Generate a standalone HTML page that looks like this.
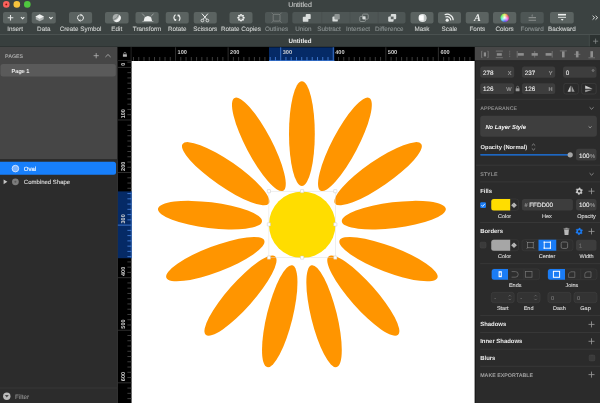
<!DOCTYPE html>
<html><head><meta charset="utf-8">
<style>
*{margin:0;padding:0}
html,body{width:600px;height:403px;overflow:hidden;background:#2c2c2c}
svg{display:block;will-change:transform;text-rendering:geometricPrecision;font-family:"Liberation Sans",sans-serif}
</style></head><body>
<svg width="600" height="403" viewBox="0 0 600 403">
<rect x="0.00" y="0.00" width="600.00" height="34.00" rx="0" fill="#3b4241" />
<line x1="0.00" y1="34.50" x2="600.00" y2="34.50" stroke="#4a5150" stroke-width="1" />
<circle cx="6.3" cy="4.4" r="3.3" fill="#fc625d"/>
<circle cx="16.8" cy="4.4" r="3.3" fill="#f7c33c"/>
<circle cx="27.3" cy="4.4" r="3.3" fill="#4fc83f"/>
<circle cx="6.3" cy="4.4" r="0.9" fill="#8c0f06"/>
<text x="300.00" y="7.10" font-size="7" fill="#c4c6c5" stroke="#c4c6c5" stroke-width="0.12" text-anchor="middle" font-weight="normal" font-style="normal" >Untitled</text>
<rect x="3.00" y="11.90" width="24.20" height="11.60" rx="2" fill="#5b6361" />
<text x="15.10" y="30.70" font-size="6.3" fill="#cdd0cf" stroke="#cdd0cf" stroke-width="0.12" text-anchor="middle" font-weight="normal" font-style="normal" >Insert</text>
<rect x="31.70" y="11.90" width="24.10" height="11.60" rx="2" fill="#5b6361" />
<text x="43.75" y="30.70" font-size="6.3" fill="#cdd0cf" stroke="#cdd0cf" stroke-width="0.12" text-anchor="middle" font-weight="normal" font-style="normal" >Data</text>
<rect x="69.00" y="11.90" width="23.10" height="11.60" rx="2" fill="#5b6361" />
<text x="80.55" y="30.70" font-size="6.3" fill="#cdd0cf" stroke="#cdd0cf" stroke-width="0.12" text-anchor="middle" font-weight="normal" font-style="normal" >Create Symbol</text>
<rect x="105.00" y="11.90" width="23.60" height="11.60" rx="2" fill="#5b6361" />
<text x="116.80" y="30.70" font-size="6.3" fill="#cdd0cf" stroke="#cdd0cf" stroke-width="0.12" text-anchor="middle" font-weight="normal" font-style="normal" >Edit</text>
<rect x="135.50" y="11.90" width="23.20" height="11.60" rx="2" fill="#5b6361" />
<text x="147.10" y="30.70" font-size="6.3" fill="#cdd0cf" stroke="#cdd0cf" stroke-width="0.12" text-anchor="middle" font-weight="normal" font-style="normal" >Transform</text>
<rect x="165.75" y="11.90" width="23.00" height="11.60" rx="2" fill="#5b6361" />
<text x="177.25" y="30.70" font-size="6.3" fill="#cdd0cf" stroke="#cdd0cf" stroke-width="0.12" text-anchor="middle" font-weight="normal" font-style="normal" >Rotate</text>
<rect x="193.75" y="11.90" width="23.00" height="11.60" rx="2" fill="#5b6361" />
<text x="205.25" y="30.70" font-size="6.3" fill="#cdd0cf" stroke="#cdd0cf" stroke-width="0.12" text-anchor="middle" font-weight="normal" font-style="normal" >Scissors</text>
<rect x="229.50" y="11.90" width="23.00" height="11.60" rx="2" fill="#5b6361" />
<text x="241.00" y="30.70" font-size="6.3" fill="#cdd0cf" stroke="#cdd0cf" stroke-width="0.12" text-anchor="middle" font-weight="normal" font-style="normal" >Rotate Copies</text>
<rect x="265.00" y="11.90" width="23.00" height="11.60" rx="2" fill="#4e5655" />
<text x="276.50" y="30.70" font-size="6.3" fill="#899090" stroke="#899090" stroke-width="0.12" text-anchor="middle" font-weight="normal" font-style="normal" >Outlines</text>
<rect x="410.50" y="11.90" width="23.00" height="11.60" rx="2" fill="#5b6361" />
<text x="422.00" y="30.70" font-size="6.3" fill="#cdd0cf" stroke="#cdd0cf" stroke-width="0.12" text-anchor="middle" font-weight="normal" font-style="normal" >Mask</text>
<rect x="438.00" y="11.90" width="23.00" height="11.60" rx="2" fill="#5b6361" />
<text x="449.50" y="30.70" font-size="6.3" fill="#cdd0cf" stroke="#cdd0cf" stroke-width="0.12" text-anchor="middle" font-weight="normal" font-style="normal" >Scale</text>
<rect x="465.75" y="11.90" width="23.00" height="11.60" rx="2" fill="#5b6361" />
<text x="477.25" y="30.70" font-size="6.3" fill="#cdd0cf" stroke="#cdd0cf" stroke-width="0.12" text-anchor="middle" font-weight="normal" font-style="normal" >Fonts</text>
<rect x="493.00" y="11.90" width="23.25" height="11.60" rx="2" fill="#5b6361" />
<text x="504.62" y="30.70" font-size="6.3" fill="#cdd0cf" stroke="#cdd0cf" stroke-width="0.12" text-anchor="middle" font-weight="normal" font-style="normal" >Colors</text>
<rect x="520.50" y="11.90" width="23.25" height="11.60" rx="2" fill="#4e5655" />
<text x="532.12" y="30.70" font-size="6.3" fill="#899090" stroke="#899090" stroke-width="0.12" text-anchor="middle" font-weight="normal" font-style="normal" >Forward</text>
<rect x="550.00" y="11.90" width="23.75" height="11.60" rx="2" fill="#5b6361" />
<text x="561.88" y="30.70" font-size="6.3" fill="#cdd0cf" stroke="#cdd0cf" stroke-width="0.12" text-anchor="middle" font-weight="normal" font-style="normal" >Backward</text>
<rect x="292.30" y="11.90" width="113.20" height="11.60" rx="2" fill="#4e5655" />
<text x="303.40" y="30.70" font-size="6.3" fill="#899090" stroke="#899090" stroke-width="0.12" text-anchor="middle" font-weight="normal" font-style="normal" >Union</text>
<line x1="321.80" y1="11.90" x2="321.80" y2="23.50" stroke="#474e4d" stroke-width="0.7" />
<text x="329.00" y="30.70" font-size="6.3" fill="#899090" stroke="#899090" stroke-width="0.12" text-anchor="middle" font-weight="normal" font-style="normal" >Subtract</text>
<line x1="350.00" y1="11.90" x2="350.00" y2="23.50" stroke="#474e4d" stroke-width="0.7" />
<text x="358.00" y="30.70" font-size="6.3" fill="#899090" stroke="#899090" stroke-width="0.12" text-anchor="middle" font-weight="normal" font-style="normal" >Intersect</text>
<line x1="378.20" y1="11.90" x2="378.20" y2="23.50" stroke="#474e4d" stroke-width="0.7" />
<text x="389.30" y="30.70" font-size="6.3" fill="#899090" stroke="#899090" stroke-width="0.12" text-anchor="middle" font-weight="normal" font-style="normal" >Difference</text>
<path d="M10.5 14.9V20.5M7.7 17.7H13.3" stroke="#e4e6e5" stroke-width="1.1"/>
<path d="M20.9 17.1L22.6 18.7L24.3 17.1" stroke="#eef0ef" stroke-width="1.1" fill="none"/>
<path d="M35.8 16.5L39.7 18.8L43.7 16.5L43.7 19.2L39.7 21.3L35.8 19.2Z" fill="#aeb3b2"/>
<path d="M39.7 14.3L44.0 16.6L39.7 18.9L35.4 16.6Z" fill="#eef0ef"/>
<path d="M49.2 17.1L50.9 18.7L52.6 17.1" stroke="#eef0ef" stroke-width="1.1" fill="none"/>
<path d="M79.6 15.0A2.9 2.9 0 0 0 79.2 20.4M81.4 20.6A2.9 2.9 0 0 0 81.8 15.2" stroke="#eef0ef" stroke-width="1.0" fill="none"/>
<path d="M80.2 13.8L82.6 15.0L80.6 16.4Z M80.8 21.8L78.4 20.6L80.4 19.2Z" fill="#eef0ef"/>
<circle cx="116.7" cy="17.9" r="4.0" fill="#a9aead"/>
<path d="M113.87 20.73Q118.4 19.6 119.53 15.07A4 4 0 0 1 113.87 20.73Z" fill="#eef0ef"/>
<path d="M113.2 19.9Q117.6 18.6 118.7 14.2" stroke="#6f7574" stroke-width="0.7" fill="none"/>
<path d="M143.7 21.1L144.6 17.6Q147.9 14.3 151.2 17.6L152.1 21.1Z" fill="#eef0ef"/>
<path d="M142.2 13.6L145.0 16.6M153.6 13.6L150.8 16.6M142.4 21.5H153.4" stroke="#c4c8c7" stroke-width="0.6" fill="none"/>
<path d="M175.5 14.6Q172.6 17.4 175.0 20.0M178.5 15.2Q181.3 18.0 178.9 20.9" stroke="#eef0ef" stroke-width="1.1" fill="none"/>
<path d="M174.4 18.9L176.4 19.3L176.0 21.0L174.2 20.6Z M177.6 14.5L179.6 14.8L179.3 16.6L177.5 16.3Z" fill="#eef0ef"/>
<circle cx="202.4" cy="20.5" r="1.35" stroke="#eef0ef" stroke-width="0.8" fill="none"/><circle cx="207.4" cy="20.5" r="1.35" stroke="#eef0ef" stroke-width="0.8" fill="none"/>
<path d="M203.1 19.3L207.9 13.6M206.7 19.3L201.9 13.6" stroke="#eef0ef" stroke-width="1.0" fill="none"/>
<circle cx="243.70" cy="17.75" r="1.05" fill="#eef0ef"/>
<circle cx="242.91" cy="19.66" r="1.05" fill="#eef0ef"/>
<circle cx="241.00" cy="20.45" r="1.05" fill="#eef0ef"/>
<circle cx="239.09" cy="19.66" r="1.05" fill="#eef0ef"/>
<circle cx="238.30" cy="17.75" r="1.05" fill="#eef0ef"/>
<circle cx="239.09" cy="15.84" r="1.05" fill="#eef0ef"/>
<circle cx="241.00" cy="15.05" r="1.05" fill="#eef0ef"/>
<circle cx="242.91" cy="15.84" r="1.05" fill="#eef0ef"/>
<circle cx="241" cy="17.75" r="1.5" fill="#5d6260" stroke="#d0d4d3" stroke-width="0.5"/>
<rect x="273.2" y="14.3" width="6.8" height="6.8" rx="1" stroke="#8a8e8d" stroke-width="0.7" fill="none"/>
<path d="M271.6 12.7L273.4 14.5M281.6 12.7L279.8 14.5M271.6 22.7L273.4 20.9M281.6 22.7L279.8 20.9" stroke="#8a8e8d" stroke-width="0.6"/>
<rect x="302.8" y="16.8" width="5.6" height="5.0" rx="0.9" fill="#d8dcdb"/><rect x="305.7" y="14.1" width="5.0" height="5.0" rx="0.9" fill="#d8dcdb"/>
<rect x="332.4" y="16.6" width="5.4" height="5.0" rx="0.9" fill="#d8dcdb"/><rect x="334.4" y="14.1" width="5.4" height="5.4" rx="0.9" fill="#8e9493"/>
<rect x="359.8" y="16.4" width="5.6" height="5.1" rx="0.9" fill="none" stroke="#8f9594" stroke-width="0.9"/><rect x="362.6" y="14.1" width="5.6" height="5.1" rx="0.9" fill="none" stroke="#8f9594" stroke-width="0.9"/><rect x="362.6" y="16.4" width="2.8" height="2.8" fill="#d8dcdb"/>
<rect x="388.2" y="16.6" width="5.4" height="5.1" rx="0.9" fill="#d8dcdb"/><rect x="390.8" y="14.1" width="5.4" height="5.1" rx="0.9" fill="#d8dcdb"/><rect x="390.8" y="16.6" width="2.8" height="2.6" fill="#5f6665"/>
<circle cx="422.5" cy="17.9" r="4.0" fill="#dfe3e2"/><rect x="419.2" y="15.4" width="4.6" height="4.8" fill="#ffffff"/><path d="M423.8 14.2A4 4 0 0 1 423.8 21.6Z" fill="#c2c7c6"/>
<path d="M445.40 17.08A3.6 3.6 0 0 1 450.79 20.51M444.66 14.76A6.0 6.0 0 0 1 453.20 20.20" stroke="#eef0ef" stroke-width="1.2" fill="none"/>
<circle cx="447.2" cy="20.2" r="1.6" fill="#eef0ef"/>
<text x="477.30" y="21.20" font-size="10.2" fill="#eef0ef" stroke="#eef0ef" stroke-width="0.0" text-anchor="middle" font-weight="bold" font-style="italic" font-family="Liberation Serif">A</text>
<defs><radialGradient id="wh" cx="0.5" cy="0.5" r="0.5"><stop offset="0" stop-color="#fff" stop-opacity="0.95"/><stop offset="1" stop-color="#fff" stop-opacity="0"/></radialGradient></defs>
<path d="M504.7 17.8L504.70 13.80A4.0 4.0 0 0 1 505.74 13.94Z" fill="rgb(255,232,76)" stroke="rgb(255,232,76)" stroke-width="0.2"/>
<path d="M504.7 17.8L505.74 13.94A4.0 4.0 0 0 1 506.70 14.34Z" fill="rgb(255,188,76)" stroke="rgb(255,188,76)" stroke-width="0.2"/>
<path d="M504.7 17.8L506.70 14.34A4.0 4.0 0 0 1 507.53 14.97Z" fill="rgb(255,143,76)" stroke="rgb(255,143,76)" stroke-width="0.2"/>
<path d="M504.7 17.8L507.53 14.97A4.0 4.0 0 0 1 508.16 15.80Z" fill="rgb(255,98,76)" stroke="rgb(255,98,76)" stroke-width="0.2"/>
<path d="M504.7 17.8L508.16 15.80A4.0 4.0 0 0 1 508.56 16.76Z" fill="rgb(255,76,98)" stroke="rgb(255,76,98)" stroke-width="0.2"/>
<path d="M504.7 17.8L508.56 16.76A4.0 4.0 0 0 1 508.70 17.80Z" fill="rgb(255,76,143)" stroke="rgb(255,76,143)" stroke-width="0.2"/>
<path d="M504.7 17.8L508.70 17.80A4.0 4.0 0 0 1 508.56 18.84Z" fill="rgb(255,76,188)" stroke="rgb(255,76,188)" stroke-width="0.2"/>
<path d="M504.7 17.8L508.56 18.84A4.0 4.0 0 0 1 508.16 19.80Z" fill="rgb(255,76,232)" stroke="rgb(255,76,232)" stroke-width="0.2"/>
<path d="M504.7 17.8L508.16 19.80A4.0 4.0 0 0 1 507.53 20.63Z" fill="rgb(232,76,255)" stroke="rgb(232,76,255)" stroke-width="0.2"/>
<path d="M504.7 17.8L507.53 20.63A4.0 4.0 0 0 1 506.70 21.26Z" fill="rgb(188,76,255)" stroke="rgb(188,76,255)" stroke-width="0.2"/>
<path d="M504.7 17.8L506.70 21.26A4.0 4.0 0 0 1 505.74 21.66Z" fill="rgb(143,76,255)" stroke="rgb(143,76,255)" stroke-width="0.2"/>
<path d="M504.7 17.8L505.74 21.66A4.0 4.0 0 0 1 504.70 21.80Z" fill="rgb(98,76,255)" stroke="rgb(98,76,255)" stroke-width="0.2"/>
<path d="M504.7 17.8L504.70 21.80A4.0 4.0 0 0 1 503.66 21.66Z" fill="rgb(76,98,255)" stroke="rgb(76,98,255)" stroke-width="0.2"/>
<path d="M504.7 17.8L503.66 21.66A4.0 4.0 0 0 1 502.70 21.26Z" fill="rgb(76,143,255)" stroke="rgb(76,143,255)" stroke-width="0.2"/>
<path d="M504.7 17.8L502.70 21.26A4.0 4.0 0 0 1 501.87 20.63Z" fill="rgb(76,188,255)" stroke="rgb(76,188,255)" stroke-width="0.2"/>
<path d="M504.7 17.8L501.87 20.63A4.0 4.0 0 0 1 501.24 19.80Z" fill="rgb(76,232,255)" stroke="rgb(76,232,255)" stroke-width="0.2"/>
<path d="M504.7 17.8L501.24 19.80A4.0 4.0 0 0 1 500.84 18.84Z" fill="rgb(76,255,232)" stroke="rgb(76,255,232)" stroke-width="0.2"/>
<path d="M504.7 17.8L500.84 18.84A4.0 4.0 0 0 1 500.70 17.80Z" fill="rgb(76,255,188)" stroke="rgb(76,255,188)" stroke-width="0.2"/>
<path d="M504.7 17.8L500.70 17.80A4.0 4.0 0 0 1 500.84 16.76Z" fill="rgb(76,255,143)" stroke="rgb(76,255,143)" stroke-width="0.2"/>
<path d="M504.7 17.8L500.84 16.76A4.0 4.0 0 0 1 501.24 15.80Z" fill="rgb(76,255,98)" stroke="rgb(76,255,98)" stroke-width="0.2"/>
<path d="M504.7 17.8L501.24 15.80A4.0 4.0 0 0 1 501.87 14.97Z" fill="rgb(98,255,76)" stroke="rgb(98,255,76)" stroke-width="0.2"/>
<path d="M504.7 17.8L501.87 14.97A4.0 4.0 0 0 1 502.70 14.34Z" fill="rgb(143,255,76)" stroke="rgb(143,255,76)" stroke-width="0.2"/>
<path d="M504.7 17.8L502.70 14.34A4.0 4.0 0 0 1 503.66 13.94Z" fill="rgb(188,255,76)" stroke="rgb(188,255,76)" stroke-width="0.2"/>
<path d="M504.7 17.8L503.66 13.94A4.0 4.0 0 0 1 504.70 13.80Z" fill="rgb(232,255,76)" stroke="rgb(232,255,76)" stroke-width="0.2"/>
<circle cx="504.7" cy="17.8" r="4.0" fill="url(#wh)"/>
<path d="M528.6 17.6h7.4M528.6 20.3h7.4" stroke="#8a8e8d" stroke-width="1.1"/><path d="M531.2 15.6l1.0-1.4 1.0 1.4z" fill="#8a8e8d"/><path d="M532.2 15.4v1.6" stroke="#8a8e8d" stroke-width="0.6"/>
<path d="M558.0 14.7h8.0" stroke="#eef0ef" stroke-width="1.6"/><path d="M558.0 17.4h8.0" stroke="#c6cac9" stroke-width="1.2"/><path d="M560.8 19.0h2.8l-1.4 1.8z" fill="#eef0ef"/>
<path d="M592.6 15.8l2 1.9-2 1.9M595.6 15.8l2 1.9-2 1.9" stroke="#eef0ef" stroke-width="0.9" fill="none"/>
<rect x="0.00" y="35.00" width="600.00" height="12.00" rx="0" fill="#383f3e" />
<rect x="589.60" y="35.00" width="10.40" height="12.00" rx="0" fill="#2c3231" />
<line x1="589.30" y1="35.00" x2="589.30" y2="47.00" stroke="#4b5352" stroke-width="0.7" />
<path d="M595.6 38.6v5.2M593 41.2h5.2" stroke="#8f9493" stroke-width="0.7"/>
<line x1="0.00" y1="47.00" x2="600.00" y2="47.00" stroke="#252a29" stroke-width="1" />
<text x="300.00" y="43.10" font-size="6.2" fill="#eeeeee" stroke="#eeeeee" stroke-width="0.0" text-anchor="middle" font-weight="bold" font-style="normal" >Untitled</text>
<rect x="0.00" y="47.00" width="117.00" height="113.00" rx="0" fill="#464646" />
<line x1="0.00" y1="159.90" x2="117.00" y2="159.90" stroke="#242424" stroke-width="1.3" />
<rect x="0.00" y="160.20" width="117.00" height="243.00" rx="0" fill="#2c2c2c" />
<text x="5.00" y="57.80" font-size="5.3" fill="#a8a8a8" stroke="#a8a8a8" stroke-width="0.0" text-anchor="start" font-weight="bold" font-style="normal" >PAGES</text>
<rect x="0.50" y="64.00" width="115.30" height="12.50" rx="2.5" fill="#5a5a5a" />
<text x="11.50" y="72.80" font-size="5.7" fill="#f2f2f2" stroke="#f2f2f2" stroke-width="0.12" text-anchor="start" font-weight="normal" font-style="normal" >Page 1</text>
<rect x="-2.00" y="161.80" width="118.00" height="13.00" rx="2.5" fill="#177ffb" />
<text x="23.80" y="171.00" font-size="6.0" fill="#ffffff" stroke="#ffffff" stroke-width="0.12" text-anchor="start" font-weight="normal" font-style="normal" >Oval</text>
<text x="23.80" y="184.20" font-size="6.0" fill="#dcdcdc" stroke="#dcdcdc" stroke-width="0.12" text-anchor="start" font-weight="normal" font-style="normal" >Combined Shape</text>
<line x1="0.00" y1="388.00" x2="117.00" y2="388.00" stroke="#3a3a3a" stroke-width="0.8" />
<text x="15.00" y="398.50" font-size="6.3" fill="#8c8c8c" stroke="#8c8c8c" stroke-width="0.12" text-anchor="start" font-weight="normal" font-style="normal" >Filter</text>
<path d="M96.2 53.1v5.2M93.6 55.7h5.2" stroke="#b5b5b5" stroke-width="0.8"/>
<path d="M105.4 57.0l2.6-2.5 2.6 2.5" stroke="#b5b5b5" stroke-width="0.8" fill="none"/>
<circle cx="15.4" cy="168.6" r="3.3" fill="#7fb4fd" stroke="#e8f1ff" stroke-width="0.8"/>
<path d="M3.6 179.4L7.4 181.8L3.6 184.2Z" fill="#c4c4c4"/>
<circle cx="15.4" cy="181.8" r="3.4" fill="#7c7c7c"/><circle cx="15.4" cy="181.8" r="1.0" fill="#5a5a5a"/>
<circle cx="6.8" cy="396.2" r="3.7" fill="#bcbcbc"/><path d="M4.8 394.9h4l-2 2.6z" fill="#4a4a4a"/>
<rect x="117.85" y="47.00" width="357.10" height="14.00" rx="0" fill="#000" />
<rect x="117.85" y="47.00" width="13.75" height="356.00" rx="0" fill="#000" />
<line x1="117.40" y1="160.50" x2="117.40" y2="403.00" stroke="#343434" stroke-width="0.9" />
<rect x="131.60" y="61.00" width="343.20" height="342.00" rx="0" fill="#ffffff" />
<rect x="269.00" y="47.30" width="65.40" height="13.70" rx="0" fill="#052a66" />
<line x1="133.49" y1="57.00" x2="133.49" y2="60.70" stroke="#4c4c4c" stroke-width="0.8" />
<line x1="138.75" y1="57.00" x2="138.75" y2="60.70" stroke="#4c4c4c" stroke-width="0.8" />
<line x1="144.01" y1="57.00" x2="144.01" y2="60.70" stroke="#4c4c4c" stroke-width="0.8" />
<line x1="149.26" y1="57.00" x2="149.26" y2="60.70" stroke="#4c4c4c" stroke-width="0.8" />
<line x1="154.52" y1="57.00" x2="154.52" y2="60.70" stroke="#4c4c4c" stroke-width="0.8" />
<line x1="159.78" y1="57.00" x2="159.78" y2="60.70" stroke="#4c4c4c" stroke-width="0.8" />
<line x1="165.04" y1="57.00" x2="165.04" y2="60.70" stroke="#4c4c4c" stroke-width="0.8" />
<line x1="170.29" y1="57.00" x2="170.29" y2="60.70" stroke="#4c4c4c" stroke-width="0.8" />
<line x1="175.55" y1="47.30" x2="175.55" y2="60.70" stroke="#3a3a3a" stroke-width="0.8" />
<text x="177.55" y="54.00" font-size="5.6" fill="#d4d4d4" stroke="#d4d4d4" stroke-width="0.0" text-anchor="start" font-weight="bold" font-style="normal" >100</text>
<line x1="180.81" y1="57.00" x2="180.81" y2="60.70" stroke="#4c4c4c" stroke-width="0.8" />
<line x1="186.06" y1="57.00" x2="186.06" y2="60.70" stroke="#4c4c4c" stroke-width="0.8" />
<line x1="191.32" y1="57.00" x2="191.32" y2="60.70" stroke="#4c4c4c" stroke-width="0.8" />
<line x1="196.58" y1="57.00" x2="196.58" y2="60.70" stroke="#4c4c4c" stroke-width="0.8" />
<line x1="201.83" y1="57.00" x2="201.83" y2="60.70" stroke="#4c4c4c" stroke-width="0.8" />
<line x1="207.09" y1="57.00" x2="207.09" y2="60.70" stroke="#4c4c4c" stroke-width="0.8" />
<line x1="212.35" y1="57.00" x2="212.35" y2="60.70" stroke="#4c4c4c" stroke-width="0.8" />
<line x1="217.61" y1="57.00" x2="217.61" y2="60.70" stroke="#4c4c4c" stroke-width="0.8" />
<line x1="222.86" y1="57.00" x2="222.86" y2="60.70" stroke="#4c4c4c" stroke-width="0.8" />
<line x1="228.12" y1="47.30" x2="228.12" y2="60.70" stroke="#3a3a3a" stroke-width="0.8" />
<text x="230.12" y="54.00" font-size="5.6" fill="#d4d4d4" stroke="#d4d4d4" stroke-width="0.0" text-anchor="start" font-weight="bold" font-style="normal" >200</text>
<line x1="233.38" y1="57.00" x2="233.38" y2="60.70" stroke="#4c4c4c" stroke-width="0.8" />
<line x1="238.63" y1="57.00" x2="238.63" y2="60.70" stroke="#4c4c4c" stroke-width="0.8" />
<line x1="243.89" y1="57.00" x2="243.89" y2="60.70" stroke="#4c4c4c" stroke-width="0.8" />
<line x1="249.15" y1="57.00" x2="249.15" y2="60.70" stroke="#4c4c4c" stroke-width="0.8" />
<line x1="254.40" y1="57.00" x2="254.40" y2="60.70" stroke="#4c4c4c" stroke-width="0.8" />
<line x1="259.66" y1="57.00" x2="259.66" y2="60.70" stroke="#4c4c4c" stroke-width="0.8" />
<line x1="264.92" y1="57.00" x2="264.92" y2="60.70" stroke="#4c4c4c" stroke-width="0.8" />
<line x1="270.18" y1="57.00" x2="270.18" y2="60.70" stroke="#4a88e6" stroke-width="0.8" />
<line x1="275.43" y1="57.00" x2="275.43" y2="60.70" stroke="#4a88e6" stroke-width="0.8" />
<line x1="280.69" y1="47.30" x2="280.69" y2="60.70" stroke="#4a88e6" stroke-width="0.8" />
<text x="282.69" y="54.00" font-size="5.6" fill="#d4d4d4" stroke="#d4d4d4" stroke-width="0.0" text-anchor="start" font-weight="bold" font-style="normal" >300</text>
<line x1="285.95" y1="57.00" x2="285.95" y2="60.70" stroke="#4a88e6" stroke-width="0.8" />
<line x1="291.20" y1="57.00" x2="291.20" y2="60.70" stroke="#4a88e6" stroke-width="0.8" />
<line x1="296.46" y1="57.00" x2="296.46" y2="60.70" stroke="#4a88e6" stroke-width="0.8" />
<line x1="301.72" y1="57.00" x2="301.72" y2="60.70" stroke="#4a88e6" stroke-width="0.8" />
<line x1="306.97" y1="57.00" x2="306.97" y2="60.70" stroke="#4a88e6" stroke-width="0.8" />
<line x1="312.23" y1="57.00" x2="312.23" y2="60.70" stroke="#4a88e6" stroke-width="0.8" />
<line x1="317.49" y1="57.00" x2="317.49" y2="60.70" stroke="#4a88e6" stroke-width="0.8" />
<line x1="322.75" y1="57.00" x2="322.75" y2="60.70" stroke="#4a88e6" stroke-width="0.8" />
<line x1="328.00" y1="57.00" x2="328.00" y2="60.70" stroke="#4a88e6" stroke-width="0.8" />
<line x1="333.26" y1="47.30" x2="333.26" y2="60.70" stroke="#4a88e6" stroke-width="0.8" />
<text x="335.26" y="54.00" font-size="5.6" fill="#d4d4d4" stroke="#d4d4d4" stroke-width="0.0" text-anchor="start" font-weight="bold" font-style="normal" >400</text>
<line x1="338.52" y1="57.00" x2="338.52" y2="60.70" stroke="#4c4c4c" stroke-width="0.8" />
<line x1="343.77" y1="57.00" x2="343.77" y2="60.70" stroke="#4c4c4c" stroke-width="0.8" />
<line x1="349.03" y1="57.00" x2="349.03" y2="60.70" stroke="#4c4c4c" stroke-width="0.8" />
<line x1="354.29" y1="57.00" x2="354.29" y2="60.70" stroke="#4c4c4c" stroke-width="0.8" />
<line x1="359.54" y1="57.00" x2="359.54" y2="60.70" stroke="#4c4c4c" stroke-width="0.8" />
<line x1="364.80" y1="57.00" x2="364.80" y2="60.70" stroke="#4c4c4c" stroke-width="0.8" />
<line x1="370.06" y1="57.00" x2="370.06" y2="60.70" stroke="#4c4c4c" stroke-width="0.8" />
<line x1="375.32" y1="57.00" x2="375.32" y2="60.70" stroke="#4c4c4c" stroke-width="0.8" />
<line x1="380.57" y1="57.00" x2="380.57" y2="60.70" stroke="#4c4c4c" stroke-width="0.8" />
<line x1="385.83" y1="47.30" x2="385.83" y2="60.70" stroke="#3a3a3a" stroke-width="0.8" />
<text x="387.83" y="54.00" font-size="5.6" fill="#d4d4d4" stroke="#d4d4d4" stroke-width="0.0" text-anchor="start" font-weight="bold" font-style="normal" >500</text>
<line x1="391.09" y1="57.00" x2="391.09" y2="60.70" stroke="#4c4c4c" stroke-width="0.8" />
<line x1="396.34" y1="57.00" x2="396.34" y2="60.70" stroke="#4c4c4c" stroke-width="0.8" />
<line x1="401.60" y1="57.00" x2="401.60" y2="60.70" stroke="#4c4c4c" stroke-width="0.8" />
<line x1="406.86" y1="57.00" x2="406.86" y2="60.70" stroke="#4c4c4c" stroke-width="0.8" />
<line x1="412.12" y1="57.00" x2="412.12" y2="60.70" stroke="#4c4c4c" stroke-width="0.8" />
<line x1="417.37" y1="57.00" x2="417.37" y2="60.70" stroke="#4c4c4c" stroke-width="0.8" />
<line x1="422.63" y1="57.00" x2="422.63" y2="60.70" stroke="#4c4c4c" stroke-width="0.8" />
<line x1="427.89" y1="57.00" x2="427.89" y2="60.70" stroke="#4c4c4c" stroke-width="0.8" />
<line x1="433.14" y1="57.00" x2="433.14" y2="60.70" stroke="#4c4c4c" stroke-width="0.8" />
<line x1="438.40" y1="47.30" x2="438.40" y2="60.70" stroke="#3a3a3a" stroke-width="0.8" />
<text x="440.40" y="54.00" font-size="5.6" fill="#d4d4d4" stroke="#d4d4d4" stroke-width="0.0" text-anchor="start" font-weight="bold" font-style="normal" >600</text>
<line x1="443.66" y1="57.00" x2="443.66" y2="60.70" stroke="#4c4c4c" stroke-width="0.8" />
<line x1="448.91" y1="57.00" x2="448.91" y2="60.70" stroke="#4c4c4c" stroke-width="0.8" />
<line x1="454.17" y1="57.00" x2="454.17" y2="60.70" stroke="#4c4c4c" stroke-width="0.8" />
<line x1="459.43" y1="57.00" x2="459.43" y2="60.70" stroke="#4c4c4c" stroke-width="0.8" />
<line x1="464.69" y1="57.00" x2="464.69" y2="60.70" stroke="#4c4c4c" stroke-width="0.8" />
<line x1="469.94" y1="57.00" x2="469.94" y2="60.70" stroke="#4c4c4c" stroke-width="0.8" />
<line x1="269.00" y1="60.50" x2="334.40" y2="60.50" stroke="#3f7fe0" stroke-width="0.7" />
<rect x="117.85" y="191.40" width="13.75" height="66.80" rx="0" fill="#052a66" />
<line x1="127.40" y1="62.14" x2="131.40" y2="62.14" stroke="#4c4c4c" stroke-width="0.8" />
<line x1="117.85" y1="67.40" x2="131.40" y2="67.40" stroke="#3a3a3a" stroke-width="0.8" />
<text transform="translate(125.3 65.80) rotate(-90)" font-size="5.6" font-weight="bold" fill="#d4d4d4">0</text>
<line x1="127.40" y1="72.66" x2="131.40" y2="72.66" stroke="#4c4c4c" stroke-width="0.8" />
<line x1="127.40" y1="77.91" x2="131.40" y2="77.91" stroke="#4c4c4c" stroke-width="0.8" />
<line x1="127.40" y1="83.17" x2="131.40" y2="83.17" stroke="#4c4c4c" stroke-width="0.8" />
<line x1="127.40" y1="88.43" x2="131.40" y2="88.43" stroke="#4c4c4c" stroke-width="0.8" />
<line x1="127.40" y1="93.69" x2="131.40" y2="93.69" stroke="#4c4c4c" stroke-width="0.8" />
<line x1="127.40" y1="98.94" x2="131.40" y2="98.94" stroke="#4c4c4c" stroke-width="0.8" />
<line x1="127.40" y1="104.20" x2="131.40" y2="104.20" stroke="#4c4c4c" stroke-width="0.8" />
<line x1="127.40" y1="109.46" x2="131.40" y2="109.46" stroke="#4c4c4c" stroke-width="0.8" />
<line x1="127.40" y1="114.71" x2="131.40" y2="114.71" stroke="#4c4c4c" stroke-width="0.8" />
<line x1="117.85" y1="119.97" x2="131.40" y2="119.97" stroke="#3a3a3a" stroke-width="0.8" />
<text transform="translate(125.3 118.37) rotate(-90)" font-size="5.6" font-weight="bold" fill="#d4d4d4">100</text>
<line x1="127.40" y1="125.23" x2="131.40" y2="125.23" stroke="#4c4c4c" stroke-width="0.8" />
<line x1="127.40" y1="130.48" x2="131.40" y2="130.48" stroke="#4c4c4c" stroke-width="0.8" />
<line x1="127.40" y1="135.74" x2="131.40" y2="135.74" stroke="#4c4c4c" stroke-width="0.8" />
<line x1="127.40" y1="141.00" x2="131.40" y2="141.00" stroke="#4c4c4c" stroke-width="0.8" />
<line x1="127.40" y1="146.25" x2="131.40" y2="146.25" stroke="#4c4c4c" stroke-width="0.8" />
<line x1="127.40" y1="151.51" x2="131.40" y2="151.51" stroke="#4c4c4c" stroke-width="0.8" />
<line x1="127.40" y1="156.77" x2="131.40" y2="156.77" stroke="#4c4c4c" stroke-width="0.8" />
<line x1="127.40" y1="162.03" x2="131.40" y2="162.03" stroke="#4c4c4c" stroke-width="0.8" />
<line x1="127.40" y1="167.28" x2="131.40" y2="167.28" stroke="#4c4c4c" stroke-width="0.8" />
<line x1="117.85" y1="172.54" x2="131.40" y2="172.54" stroke="#3a3a3a" stroke-width="0.8" />
<text transform="translate(125.3 170.94) rotate(-90)" font-size="5.6" font-weight="bold" fill="#d4d4d4">200</text>
<line x1="127.40" y1="177.80" x2="131.40" y2="177.80" stroke="#4c4c4c" stroke-width="0.8" />
<line x1="127.40" y1="183.05" x2="131.40" y2="183.05" stroke="#4c4c4c" stroke-width="0.8" />
<line x1="127.40" y1="188.31" x2="131.40" y2="188.31" stroke="#4c4c4c" stroke-width="0.8" />
<line x1="127.40" y1="193.57" x2="131.40" y2="193.57" stroke="#4a88e6" stroke-width="0.8" />
<line x1="127.40" y1="198.82" x2="131.40" y2="198.82" stroke="#4a88e6" stroke-width="0.8" />
<line x1="127.40" y1="204.08" x2="131.40" y2="204.08" stroke="#4a88e6" stroke-width="0.8" />
<line x1="127.40" y1="209.34" x2="131.40" y2="209.34" stroke="#4a88e6" stroke-width="0.8" />
<line x1="127.40" y1="214.60" x2="131.40" y2="214.60" stroke="#4a88e6" stroke-width="0.8" />
<line x1="127.40" y1="219.85" x2="131.40" y2="219.85" stroke="#4a88e6" stroke-width="0.8" />
<line x1="117.85" y1="225.11" x2="131.40" y2="225.11" stroke="#4a88e6" stroke-width="0.8" />
<text transform="translate(125.3 223.51) rotate(-90)" font-size="5.6" font-weight="bold" fill="#d4d4d4">300</text>
<line x1="127.40" y1="230.37" x2="131.40" y2="230.37" stroke="#4a88e6" stroke-width="0.8" />
<line x1="127.40" y1="235.62" x2="131.40" y2="235.62" stroke="#4a88e6" stroke-width="0.8" />
<line x1="127.40" y1="240.88" x2="131.40" y2="240.88" stroke="#4a88e6" stroke-width="0.8" />
<line x1="127.40" y1="246.14" x2="131.40" y2="246.14" stroke="#4a88e6" stroke-width="0.8" />
<line x1="127.40" y1="251.39" x2="131.40" y2="251.39" stroke="#4a88e6" stroke-width="0.8" />
<line x1="127.40" y1="256.65" x2="131.40" y2="256.65" stroke="#4a88e6" stroke-width="0.8" />
<line x1="127.40" y1="261.91" x2="131.40" y2="261.91" stroke="#4c4c4c" stroke-width="0.8" />
<line x1="127.40" y1="267.17" x2="131.40" y2="267.17" stroke="#4c4c4c" stroke-width="0.8" />
<line x1="127.40" y1="272.42" x2="131.40" y2="272.42" stroke="#4c4c4c" stroke-width="0.8" />
<line x1="117.85" y1="277.68" x2="131.40" y2="277.68" stroke="#3a3a3a" stroke-width="0.8" />
<text transform="translate(125.3 276.08) rotate(-90)" font-size="5.6" font-weight="bold" fill="#d4d4d4">400</text>
<line x1="127.40" y1="282.94" x2="131.40" y2="282.94" stroke="#4c4c4c" stroke-width="0.8" />
<line x1="127.40" y1="288.19" x2="131.40" y2="288.19" stroke="#4c4c4c" stroke-width="0.8" />
<line x1="127.40" y1="293.45" x2="131.40" y2="293.45" stroke="#4c4c4c" stroke-width="0.8" />
<line x1="127.40" y1="298.71" x2="131.40" y2="298.71" stroke="#4c4c4c" stroke-width="0.8" />
<line x1="127.40" y1="303.96" x2="131.40" y2="303.96" stroke="#4c4c4c" stroke-width="0.8" />
<line x1="127.40" y1="309.22" x2="131.40" y2="309.22" stroke="#4c4c4c" stroke-width="0.8" />
<line x1="127.40" y1="314.48" x2="131.40" y2="314.48" stroke="#4c4c4c" stroke-width="0.8" />
<line x1="127.40" y1="319.74" x2="131.40" y2="319.74" stroke="#4c4c4c" stroke-width="0.8" />
<line x1="127.40" y1="324.99" x2="131.40" y2="324.99" stroke="#4c4c4c" stroke-width="0.8" />
<line x1="117.85" y1="330.25" x2="131.40" y2="330.25" stroke="#3a3a3a" stroke-width="0.8" />
<text transform="translate(125.3 328.65) rotate(-90)" font-size="5.6" font-weight="bold" fill="#d4d4d4">500</text>
<line x1="127.40" y1="335.51" x2="131.40" y2="335.51" stroke="#4c4c4c" stroke-width="0.8" />
<line x1="127.40" y1="340.76" x2="131.40" y2="340.76" stroke="#4c4c4c" stroke-width="0.8" />
<line x1="127.40" y1="346.02" x2="131.40" y2="346.02" stroke="#4c4c4c" stroke-width="0.8" />
<line x1="127.40" y1="351.28" x2="131.40" y2="351.28" stroke="#4c4c4c" stroke-width="0.8" />
<line x1="127.40" y1="356.53" x2="131.40" y2="356.53" stroke="#4c4c4c" stroke-width="0.8" />
<line x1="127.40" y1="361.79" x2="131.40" y2="361.79" stroke="#4c4c4c" stroke-width="0.8" />
<line x1="127.40" y1="367.05" x2="131.40" y2="367.05" stroke="#4c4c4c" stroke-width="0.8" />
<line x1="127.40" y1="372.31" x2="131.40" y2="372.31" stroke="#4c4c4c" stroke-width="0.8" />
<line x1="127.40" y1="377.56" x2="131.40" y2="377.56" stroke="#4c4c4c" stroke-width="0.8" />
<line x1="117.85" y1="382.82" x2="131.40" y2="382.82" stroke="#3a3a3a" stroke-width="0.8" />
<text transform="translate(125.3 381.22) rotate(-90)" font-size="5.6" font-weight="bold" fill="#d4d4d4">600</text>
<line x1="127.40" y1="388.08" x2="131.40" y2="388.08" stroke="#4c4c4c" stroke-width="0.8" />
<line x1="127.40" y1="393.33" x2="131.40" y2="393.33" stroke="#4c4c4c" stroke-width="0.8" />
<line x1="127.40" y1="398.59" x2="131.40" y2="398.59" stroke="#4c4c4c" stroke-width="0.8" />
<line x1="131.20" y1="191.40" x2="131.20" y2="258.20" stroke="#3f7fe0" stroke-width="0.7" />
<line x1="117.85" y1="60.50" x2="131.60" y2="60.50" stroke="#2a2a2a" stroke-width="0.8" />
<rect x="122.9" y="54.2" width="4.0" height="2.6" rx="0.4" fill="#b5b5b5"/><path d="M123.8 54.4v-0.9a1.1 1.1 0 0 1 2.2 0v0.9" stroke="#b5b5b5" stroke-width="0.6" fill="none"/>
<line x1="131.10" y1="47.00" x2="131.10" y2="61.00" stroke="#333333" stroke-width="0.7" />
<rect x="474.85" y="47.00" width="125.15" height="356.00" rx="0" fill="#2b2b2b" />
<line x1="475.40" y1="61.00" x2="475.40" y2="403.00" stroke="#1c1c1c" stroke-width="1.1" />
<rect x="474.85" y="47.00" width="125.15" height="13.40" rx="0" fill="#474747" />
<path d="M482.4 51.2h-0.8v6.4h0.8M487.4 51.2h0.8v6.4h-0.8" stroke="#8e8e8e" stroke-width="0.6" fill="none"/><rect x="483.8" y="52.4" width="2.2" height="4.0" fill="#8e8e8e"/>
<path d="M495.8 51.1h7M495.8 57.7h7" stroke="#8e8e8e" stroke-width="0.6"/><rect x="496.8" y="53.2" width="5" height="2.5" fill="#8e8e8e"/>
<path d="M509.7 50.8v7.2" stroke="#8e8e8e" stroke-width="0.6" stroke-dasharray="0.9 0.9"/>
<path d="M517.2 51v6.6" stroke="#8e8e8e" stroke-width="0.6"/><rect x="517.8" y="53.1" width="6" height="2.6" fill="#8e8e8e"/>
<path d="M534.7 51v6.6" stroke="#8e8e8e" stroke-width="0.6"/><rect x="531.6" y="53.1" width="6.2" height="2.6" fill="#8e8e8e"/>
<path d="M552.2 51v6.6" stroke="#8e8e8e" stroke-width="0.6"/><rect x="545.6" y="53.1" width="6" height="2.6" fill="#8e8e8e"/>
<path d="M559.8 50.9h7" stroke="#8e8e8e" stroke-width="0.6"/><rect x="562.0" y="51.4" width="2.6" height="6" fill="#8e8e8e"/>
<path d="M574 54.3h6.4" stroke="#8e8e8e" stroke-width="0.6"/><rect x="575.9" y="51.2" width="2.6" height="6.2" fill="#8e8e8e"/>
<path d="M588.4 57.8h6.6" stroke="#8e8e8e" stroke-width="0.6"/><rect x="590.4" y="51.2" width="2.6" height="6" fill="#8e8e8e"/>
<line x1="474.85" y1="60.60" x2="600.00" y2="60.60" stroke="#2a2a2a" stroke-width="0.9" />
<rect x="480.20" y="66.60" width="34.00" height="11.20" rx="2.5" fill="#3d3d3d" />
<text x="483.00" y="74.80" font-size="6.3" fill="#ececec" stroke="#ececec" stroke-width="0.12" text-anchor="start" font-weight="normal" font-style="normal" >278</text>
<text x="511.60" y="74.70" font-size="5.6" fill="#a6a6a6" stroke="#a6a6a6" stroke-width="0.12" text-anchor="end" font-weight="normal" font-style="normal" >X</text>
<rect x="521.90" y="66.60" width="33.30" height="11.20" rx="2.5" fill="#3d3d3d" />
<text x="524.70" y="74.80" font-size="6.3" fill="#ececec" stroke="#ececec" stroke-width="0.12" text-anchor="start" font-weight="normal" font-style="normal" >237</text>
<text x="552.60" y="74.70" font-size="5.6" fill="#a6a6a6" stroke="#a6a6a6" stroke-width="0.12" text-anchor="end" font-weight="normal" font-style="normal" >Y</text>
<rect x="563.00" y="66.60" width="33.50" height="11.20" rx="2.5" fill="#3d3d3d" />
<text x="565.80" y="74.80" font-size="6.3" fill="#ececec" stroke="#ececec" stroke-width="0.12" text-anchor="start" font-weight="normal" font-style="normal" >0</text>
<circle cx="593.10" cy="70.50" r="0.9" fill="none" stroke="#a6a6a6" stroke-width="0.6"/>
<rect x="480.20" y="83.20" width="34.00" height="10.80" rx="2.5" fill="#3d3d3d" />
<text x="483.00" y="91.00" font-size="6.3" fill="#ececec" stroke="#ececec" stroke-width="0.12" text-anchor="start" font-weight="normal" font-style="normal" >126</text>
<text x="511.60" y="90.90" font-size="5.6" fill="#a6a6a6" stroke="#a6a6a6" stroke-width="0.12" text-anchor="end" font-weight="normal" font-style="normal" >W</text>
<rect x="521.90" y="83.20" width="33.30" height="10.80" rx="2.5" fill="#3d3d3d" />
<text x="524.70" y="91.00" font-size="6.3" fill="#ececec" stroke="#ececec" stroke-width="0.12" text-anchor="start" font-weight="normal" font-style="normal" >126</text>
<text x="552.60" y="90.90" font-size="5.6" fill="#a6a6a6" stroke="#a6a6a6" stroke-width="0.12" text-anchor="end" font-weight="normal" font-style="normal" >H</text>
<rect x="515.7" y="88.2" width="3.8" height="3.1" rx="0.4" fill="#9a9a9a"/><path d="M516.5 88.4v-1a1.1 1.1 0 0 1 2.2 0v1" stroke="#9a9a9a" stroke-width="0.6" fill="none"/>
<rect x="563.80" y="83.40" width="14.60" height="10.60" rx="2" fill="#2b2b2b" stroke="#404040" stroke-width="0.7"/>
<rect x="581.60" y="83.40" width="14.60" height="10.60" rx="2" fill="#2b2b2b" stroke="#404040" stroke-width="0.7"/>
<path d="M570.6 85.6L567.6 91.8H570.6Z" fill="#cfcfcf"/><path d="M571.6 85.6L574.6 91.8H571.6Z" fill="#9a9a9a"/>
<path d="M585.2 85.6L592.6 88.7H585.2Z" fill="#cfcfcf"/><path d="M585.2 89.7L592.6 89.7L585.2 92.2Z" fill="#9a9a9a"/>
<line x1="476.00" y1="99.30" x2="600.00" y2="99.30" stroke="#3b3b3b" stroke-width="0.8" />
<text x="480.20" y="110.20" font-size="5.25" fill="#8e8e8e" stroke="#8e8e8e" stroke-width="0.0" text-anchor="start" font-weight="bold" font-style="normal" >APPEARANCE</text>
<path d="M589.6 107.3l2 1.9 2-1.9" stroke="#a0a0a0" stroke-width="0.8" fill="none"/>
<rect x="480.20" y="115.80" width="116.70" height="20.90" rx="3" fill="#3e3e3e" />
<text x="485.40" y="128.60" font-size="5.85" fill="#f4f4f4" stroke="#f4f4f4" stroke-width="0.0" text-anchor="start" font-weight="bold" font-style="italic" >No Layer Style</text>
<path d="M588.6 126.4l1.5 1.4 1.5-1.4" stroke="#bdbdbd" stroke-width="0.7" fill="none"/>
<text x="480.60" y="149.00" font-size="5.8" fill="#ececec" stroke="#ececec" stroke-width="0.0" text-anchor="start" font-weight="bold" font-style="normal" >Opacity (Normal)</text>
<path d="M531.8 145.6l1.7-1.6 1.7 1.6M531.8 148.4l1.7 1.6 1.7-1.6" stroke="#a8a8a8" stroke-width="0.7" fill="none"/>
<line x1="480.80" y1="154.80" x2="570.00" y2="154.80" stroke="#1a7cf5" stroke-width="1.3" stroke-linecap="round"/>
<circle cx="570.2" cy="154.8" r="2.6" fill="#a5a5a5"/>
<rect x="576.00" y="148.70" width="20.50" height="11.90" rx="2.5" fill="#3d3d3d" />
<text x="579.00" y="157.60" font-size="6.3" fill="#ececec" stroke="#ececec" stroke-width="0.12" text-anchor="start" font-weight="normal" font-style="normal" >100</text>
<text x="595.00" y="157.60" font-size="5.6" fill="#9a9a9a" stroke="#9a9a9a" stroke-width="0.12" text-anchor="end" font-weight="normal" font-style="normal" >%</text>
<line x1="476.00" y1="165.20" x2="600.00" y2="165.20" stroke="#3b3b3b" stroke-width="0.8" />
<text x="480.20" y="175.80" font-size="5.4" fill="#8e8e8e" stroke="#8e8e8e" stroke-width="0.0" text-anchor="start" font-weight="bold" font-style="normal" >STYLE</text>
<path d="M589.6 173.2l2 1.9 2-1.9" stroke="#a0a0a0" stroke-width="0.8" fill="none"/>
<line x1="480.20" y1="181.90" x2="600.00" y2="181.90" stroke="#3b3b3b" stroke-width="0.8" />
<text x="480.20" y="193.20" font-size="5.95" fill="#ececec" stroke="#ececec" stroke-width="0.0" text-anchor="start" font-weight="bold" font-style="normal" >Fills</text>
<polygon points="579.20,187.70 580.11,187.82 580.50,188.95 581.04,189.36 582.23,189.45 582.58,190.29 581.80,191.20 581.71,191.87 582.23,192.95 581.67,193.67 580.50,193.45 579.87,193.71 579.20,194.70 578.29,194.58 577.90,193.45 577.36,193.04 576.17,192.95 575.82,192.11 576.60,191.20 576.69,190.53 576.17,189.45 576.73,188.73 577.90,188.95 578.53,188.69" fill="#c8c8c8" stroke="#c8c8c8" stroke-width="0.3" stroke-linejoin="round"/><circle cx="579.2" cy="191.2" r="1.2" fill="#2b2b2b"/>
<path d="M591.5 188.2v6M588.5 191.2h6" stroke="#9d9d9d" stroke-width="0.8"/>
<rect x="480.20" y="202.30" width="5.80" height="5.60" rx="1.2" fill="#1a7cf5" />
<path d="M481.4 205.1l1.3 1.3 2.2-2.6" stroke="#fff" stroke-width="0.8" fill="none"/>
<rect x="491.25" y="199.00" width="27.30" height="11.40" rx="2.5" fill="#2b2b2b" stroke="#3d3d3d" stroke-width="0.6"/>
<path d="M493.75 199H510.2V210.4H493.75A2.5 2.5 0 0 1 491.25 207.9V201.5A2.5 2.5 0 0 1 493.75 199Z" fill="#ffdd00"/>
<path d="M514 202.4l2.8 2.8-2.8 2.8-2.8-2.8z" fill="#bdbdbd"/><path d="M512.6 205.2l1.4-1.4M513.9 206.5l1.4-1.4" stroke="#707070" stroke-width="0.4"/>
<rect x="521.90" y="199.00" width="51.00" height="11.40" rx="2.5" fill="#3d3d3d" />
<text x="524.40" y="207.40" font-size="5.8" fill="#9a9a9a" stroke="#9a9a9a" stroke-width="0.12" text-anchor="start" font-weight="normal" font-style="normal" >#</text>
<text x="529.20" y="207.40" font-size="6.3" fill="#ececec" stroke="#ececec" stroke-width="0.12" text-anchor="start" font-weight="normal" font-style="normal" >FFDD00</text>
<rect x="576.00" y="199.00" width="20.50" height="11.40" rx="2.5" fill="#3d3d3d" />
<text x="579.00" y="207.40" font-size="6.3" fill="#ececec" stroke="#ececec" stroke-width="0.12" text-anchor="start" font-weight="normal" font-style="normal" >100</text>
<text x="595.00" y="207.40" font-size="5.6" fill="#9a9a9a" stroke="#9a9a9a" stroke-width="0.12" text-anchor="end" font-weight="normal" font-style="normal" >%</text>
<text x="504.60" y="217.70" font-size="5.5" fill="#dcdcdc" stroke="#dcdcdc" stroke-width="0.12" text-anchor="middle" font-weight="normal" font-style="normal" >Color</text>
<text x="546.90" y="217.70" font-size="5.5" fill="#dcdcdc" stroke="#dcdcdc" stroke-width="0.12" text-anchor="middle" font-weight="normal" font-style="normal" >Hex</text>
<text x="586.50" y="217.70" font-size="5.5" fill="#dcdcdc" stroke="#dcdcdc" stroke-width="0.12" text-anchor="middle" font-weight="normal" font-style="normal" >Opacity</text>
<line x1="480.20" y1="222.50" x2="600.00" y2="222.50" stroke="#3b3b3b" stroke-width="0.8" />
<text x="480.20" y="233.30" font-size="5.95" fill="#ececec" stroke="#ececec" stroke-width="0.0" text-anchor="start" font-weight="bold" font-style="normal" >Borders</text>
<path d="M564.1 229.6h4.8l-0.5 5.4h-3.8z" fill="#b8b8b8"/><rect x="563.5" y="228.4" width="6" height="0.9" rx="0.3" fill="#b8b8b8"/><rect x="565.4" y="227.8" width="2.2" height="0.8" fill="#b8b8b8"/>
<polygon points="579.20,227.90 580.11,228.02 580.50,229.15 581.04,229.56 582.23,229.65 582.58,230.49 581.80,231.40 581.71,232.07 582.23,233.15 581.67,233.87 580.50,233.65 579.87,233.91 579.20,234.90 578.29,234.78 577.90,233.65 577.36,233.24 576.17,233.15 575.82,232.31 576.60,231.40 576.69,230.73 576.17,229.65 576.73,228.93 577.90,229.15 578.53,228.89" fill="#1a7cf5" stroke="#1a7cf5" stroke-width="0.3" stroke-linejoin="round"/><circle cx="579.2" cy="231.4" r="1.2" fill="#2b2b2b"/>
<path d="M591.5 228.4v6M588.5 231.4h6" stroke="#9d9d9d" stroke-width="0.8"/>
<rect x="480.20" y="242.20" width="5.80" height="5.80" rx="1.2" fill="#3a3a3a" stroke="#4a4a4a" stroke-width="0.5"/>
<rect x="491.25" y="239.70" width="27.30" height="11.05" rx="2.5" fill="#2b2b2b" stroke="#3d3d3d" stroke-width="0.6"/>
<path d="M493.75 239.7H510.2V250.75H493.75A2.5 2.5 0 0 1 491.25 248.25V242.2A2.5 2.5 0 0 1 493.75 239.7Z" fill="#a6a6a6"/>
<path d="M514 242.4l2.8 2.8-2.8 2.8-2.8-2.8z" fill="#bdbdbd"/><path d="M512.6 245.2l1.4-1.4M513.9 246.5l1.4-1.4" stroke="#707070" stroke-width="0.4"/>
<rect x="521.90" y="239.70" width="51.00" height="11.05" rx="2.5" fill="#2e2e2e" stroke="#3c3c3c" stroke-width="0.6"/>
<rect x="538.50" y="239.70" width="17.75" height="11.05" rx="0" fill="#1a7cf5" />
<rect x="527.6" y="242.6" width="5.6" height="5.2" fill="none" stroke="#8a8a8a" stroke-width="0.6"/><path d="M526.6 241.6l1.4 1.4M534.2 241.6l-1.4 1.4M526.6 248.8l1.4-1.4M534.2 248.8l-1.4-1.4" stroke="#8a8a8a" stroke-width="0.6"/>
<rect x="544.2" y="242.2" width="6.2" height="6.0" fill="none" stroke="#ffffff" stroke-width="0.9"/><path d="M543.6 241.6h1.2v1.2h-1.2zM549.8 241.6h1.2v1.2h-1.2zM543.6 247.6h1.2v1.2h-1.2zM549.8 247.6h1.2v1.2h-1.2z" fill="#ffffff"/>
<rect x="561.2" y="242.0" width="6.4" height="6.4" rx="1.4" fill="none" stroke="#747474" stroke-width="0.9"/>
<rect x="576.00" y="239.70" width="20.50" height="11.05" rx="2.5" fill="#3d3d3d" />
<text x="578.80" y="247.75" font-size="6.3" fill="#6a6a6a" stroke="#6a6a6a" stroke-width="0.12" text-anchor="start" font-weight="normal" font-style="normal" >1</text>
<text x="504.60" y="257.80" font-size="5.5" fill="#dcdcdc" stroke="#dcdcdc" stroke-width="0.12" text-anchor="middle" font-weight="normal" font-style="normal" >Color</text>
<text x="547.00" y="257.80" font-size="5.5" fill="#dcdcdc" stroke="#dcdcdc" stroke-width="0.12" text-anchor="middle" font-weight="normal" font-style="normal" >Center</text>
<text x="586.50" y="257.80" font-size="5.5" fill="#dcdcdc" stroke="#dcdcdc" stroke-width="0.12" text-anchor="middle" font-weight="normal" font-style="normal" >Width</text>
<line x1="480.20" y1="263.70" x2="600.00" y2="263.70" stroke="#3b3b3b" stroke-width="0.8" />
<rect x="491.70" y="268.90" width="47.90" height="10.80" rx="2.5" fill="#2e2e2e" stroke="#3c3c3c" stroke-width="0.6"/>
<path d="M494.2 268.9H508V279.7H494.2A2.5 2.5 0 0 1 491.7 277.2V271.4A2.5 2.5 0 0 1 494.2 268.9Z" fill="#1a7cf5"/>
<rect x="498.6" y="271.2" width="3.2" height="6" fill="#fff"/><rect x="499.6" y="272.6" width="1.2" height="3.2" fill="#1a7cf5"/>
<path d="M511.6 271.6h3.8a2.8 2.8 0 0 1 0 5.6h-3.8" fill="none" stroke="#777" stroke-width="0.7"/><rect x="525.6" y="271.4" width="6.4" height="5.8" fill="none" stroke="#777" stroke-width="0.7"/>
<rect x="547.90" y="268.90" width="49.00" height="10.80" rx="2.5" fill="#2e2e2e" stroke="#3c3c3c" stroke-width="0.6"/>
<path d="M550.4 268.9H565V279.7H550.4A2.5 2.5 0 0 1 547.9 277.2V271.4A2.5 2.5 0 0 1 550.4 268.9Z" fill="#1a7cf5"/>
<rect x="553.4" y="271.3" width="6.2" height="6" fill="none" stroke="#fff" stroke-width="1"/>
<path d="M568.6 277.4v-3.6l2-2h4.2v5.6z" fill="none" stroke="#777" stroke-width="0.7"/><path d="M584.8 277.4v-3.0a2.6 2.6 0 0 1 2.6-2.6h3.6v5.6z" fill="none" stroke="#777" stroke-width="0.7"/>
<line x1="524.00" y1="269.20" x2="524.00" y2="279.40" stroke="#3c3c3c" stroke-width="0.6" />
<line x1="580.80" y1="269.20" x2="580.80" y2="279.40" stroke="#3c3c3c" stroke-width="0.6" />
<text x="515.20" y="287.00" font-size="5.5" fill="#dcdcdc" stroke="#dcdcdc" stroke-width="0.12" text-anchor="middle" font-weight="normal" font-style="normal" >Ends</text>
<text x="571.90" y="287.00" font-size="5.5" fill="#dcdcdc" stroke="#dcdcdc" stroke-width="0.12" text-anchor="middle" font-weight="normal" font-style="normal" >Joins</text>
<rect x="491.25" y="292.30" width="22.95" height="10.40" rx="2.5" fill="#333333" stroke="#414141" stroke-width="0.6"/>
<text x="494.25" y="300.20" font-size="5.8" fill="#7a7a7a" stroke="#7a7a7a" stroke-width="0.12" text-anchor="start" font-weight="normal" font-style="normal" >-</text>
<path d="M508.6 296.4l1.2-1.2 1.2 1.2M508.6 298.8l1.2 1.2 1.2-1.2" stroke="#7a7a7a" stroke-width="0.6" fill="none"/>
<rect x="517.30" y="292.30" width="22.70" height="10.40" rx="2.5" fill="#333333" stroke="#414141" stroke-width="0.6"/>
<text x="520.30" y="300.20" font-size="5.8" fill="#7a7a7a" stroke="#7a7a7a" stroke-width="0.12" text-anchor="start" font-weight="normal" font-style="normal" >-</text>
<path d="M534.4 296.4l1.2-1.2 1.2 1.2M534.4 298.8l1.2 1.2 1.2-1.2" stroke="#7a7a7a" stroke-width="0.6" fill="none"/>
<rect x="547.90" y="292.30" width="22.90" height="10.40" rx="2.5" fill="#333333" stroke="#414141" stroke-width="0.6"/>
<text x="550.90" y="300.20" font-size="5.8" fill="#7a7a7a" stroke="#7a7a7a" stroke-width="0.12" text-anchor="start" font-weight="normal" font-style="normal" >0</text>
<rect x="574.00" y="292.30" width="22.90" height="10.40" rx="2.5" fill="#333333" stroke="#414141" stroke-width="0.6"/>
<text x="577.00" y="300.20" font-size="5.8" fill="#7a7a7a" stroke="#7a7a7a" stroke-width="0.12" text-anchor="start" font-weight="normal" font-style="normal" >0</text>
<text x="502.70" y="310.00" font-size="5.5" fill="#dcdcdc" stroke="#dcdcdc" stroke-width="0.12" text-anchor="middle" font-weight="normal" font-style="normal" >Start</text>
<text x="528.60" y="310.00" font-size="5.5" fill="#dcdcdc" stroke="#dcdcdc" stroke-width="0.12" text-anchor="middle" font-weight="normal" font-style="normal" >End</text>
<text x="559.40" y="310.00" font-size="5.5" fill="#dcdcdc" stroke="#dcdcdc" stroke-width="0.12" text-anchor="middle" font-weight="normal" font-style="normal" >Dash</text>
<text x="585.50" y="310.00" font-size="5.5" fill="#dcdcdc" stroke="#dcdcdc" stroke-width="0.12" text-anchor="middle" font-weight="normal" font-style="normal" >Gap</text>
<line x1="480.20" y1="315.60" x2="600.00" y2="315.60" stroke="#3b3b3b" stroke-width="0.8" />
<text x="480.20" y="326.00" font-size="5.95" fill="#ececec" stroke="#ececec" stroke-width="0.0" text-anchor="start" font-weight="bold" font-style="normal" >Shadows</text>
<path d="M591.5 321.4v6M588.5 324.4h6" stroke="#9d9d9d" stroke-width="0.8"/>
<line x1="480.20" y1="332.50" x2="600.00" y2="332.50" stroke="#3b3b3b" stroke-width="0.8" />
<text x="480.20" y="343.10" font-size="5.95" fill="#ececec" stroke="#ececec" stroke-width="0.0" text-anchor="start" font-weight="bold" font-style="normal" >Inner Shadows</text>
<path d="M591.5 338.3v6M588.5 341.3h6" stroke="#9d9d9d" stroke-width="0.8"/>
<line x1="480.20" y1="349.20" x2="600.00" y2="349.20" stroke="#3b3b3b" stroke-width="0.8" />
<text x="480.20" y="360.20" font-size="5.95" fill="#ececec" stroke="#ececec" stroke-width="0.0" text-anchor="start" font-weight="bold" font-style="normal" >Blurs</text>
<rect x="589.20" y="355.10" width="5.60" height="5.80" rx="1.2" fill="#3a3a3a" stroke="#4a4a4a" stroke-width="0.5"/>
<line x1="480.20" y1="366.25" x2="600.00" y2="366.25" stroke="#3b3b3b" stroke-width="0.8" />
<text x="480.20" y="377.00" font-size="5.3" fill="#a0a0a0" stroke="#a0a0a0" stroke-width="0.0" text-anchor="start" font-weight="bold" font-style="normal" >MAKE EXPORTABLE</text>
<path d="M591.5 371.6v6M588.5 374.6h6" stroke="#9d9d9d" stroke-width="0.8"/>
<g fill="#ff9500"><ellipse cx="301.9" cy="133.70" rx="12.9" ry="52.4" transform="rotate(0.000 301.9 226.3)"/><ellipse cx="301.9" cy="133.70" rx="12.9" ry="52.4" transform="rotate(27.692 301.9 226.3)"/><ellipse cx="301.9" cy="133.70" rx="12.9" ry="52.4" transform="rotate(55.385 301.9 226.3)"/><ellipse cx="301.9" cy="133.70" rx="12.9" ry="52.4" transform="rotate(83.077 301.9 226.3)"/><ellipse cx="301.9" cy="133.70" rx="12.9" ry="52.4" transform="rotate(110.769 301.9 226.3)"/><ellipse cx="301.9" cy="133.70" rx="12.9" ry="52.4" transform="rotate(138.462 301.9 226.3)"/><ellipse cx="301.9" cy="133.70" rx="12.9" ry="52.4" transform="rotate(166.154 301.9 226.3)"/><ellipse cx="301.9" cy="133.70" rx="12.9" ry="52.4" transform="rotate(193.846 301.9 226.3)"/><ellipse cx="301.9" cy="133.70" rx="12.9" ry="52.4" transform="rotate(221.538 301.9 226.3)"/><ellipse cx="301.9" cy="133.70" rx="12.9" ry="52.4" transform="rotate(249.231 301.9 226.3)"/><ellipse cx="301.9" cy="133.70" rx="12.9" ry="52.4" transform="rotate(276.923 301.9 226.3)"/><ellipse cx="301.9" cy="133.70" rx="12.9" ry="52.4" transform="rotate(304.615 301.9 226.3)"/><ellipse cx="301.9" cy="133.70" rx="12.9" ry="52.4" transform="rotate(332.308 301.9 226.3)"/></g><circle cx="302.2" cy="224.7" r="33.3" fill="#ffdd00"/><rect x="268.9" y="191.2" width="66.4" height="66.4" fill="none" stroke="#dcdcdc" stroke-width="0.45"/>
<rect x="267.30" y="189.60" width="3.2" height="3.2" rx="0.3" fill="#ffffff" stroke="#c4c4c4" stroke-width="0.45"/>
<rect x="267.30" y="222.80" width="3.2" height="3.2" rx="0.3" fill="#ffffff" stroke="#c4c4c4" stroke-width="0.45"/>
<rect x="267.30" y="256.00" width="3.2" height="3.2" rx="0.3" fill="#ffffff" stroke="#c4c4c4" stroke-width="0.45"/>
<rect x="300.50" y="189.60" width="3.2" height="3.2" rx="0.3" fill="#ffffff" stroke="#c4c4c4" stroke-width="0.45"/>
<rect x="300.50" y="256.00" width="3.2" height="3.2" rx="0.3" fill="#ffffff" stroke="#c4c4c4" stroke-width="0.45"/>
<rect x="333.70" y="189.60" width="3.2" height="3.2" rx="0.3" fill="#ffffff" stroke="#c4c4c4" stroke-width="0.45"/>
<rect x="333.70" y="222.80" width="3.2" height="3.2" rx="0.3" fill="#ffffff" stroke="#c4c4c4" stroke-width="0.45"/>
<rect x="333.70" y="256.00" width="3.2" height="3.2" rx="0.3" fill="#ffffff" stroke="#c4c4c4" stroke-width="0.45"/>
</svg>
</body></html>
